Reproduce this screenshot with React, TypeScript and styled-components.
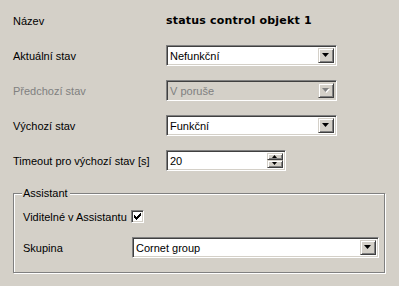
import React from "react";
import styled, { createGlobalStyle } from "styled-components";

const GlobalStyle = createGlobalStyle`
  html, body {
    margin: 0;
    padding: 0;
    background: #d4d0c8;
  }
  body {
    font-family: "Liberation Sans", Arial, sans-serif;
    font-size: 11px;
    color: #000000;
  }
`;

const Page = styled.div`
  width: 399px;
  height: 286px;
  background: #d4d0c8;
  overflow: hidden;
`;

const Form = styled.div`
  display: grid;
  grid-template-columns: 153px 171px;
  grid-auto-rows: 35px;
  align-items: center;
  padding: 3px 0 0 13px;
`;

const Label = styled.div<{ $disabled?: boolean }>`
  color: ${(p) => (p.$disabled ? "#808080" : "#000000")};
  white-space: nowrap;
`;

const Title = styled.div`
  font-family: "DejaVu Sans", "Liberation Sans", sans-serif;
  font-weight: bold;
  font-size: 11px;
  letter-spacing: 0.2px;
  white-space: nowrap;
`;

const Sunken = styled.div<{ $disabled?: boolean; $width?: number }>`
  box-sizing: border-box;
  width: ${(p) => (p.$width ? `${p.$width}px` : "100%")};
  height: 21px;
  display: flex;
  align-items: stretch;
  background: ${(p) => (p.$disabled ? "#d4d0c8" : "#ffffff")};
  border-top: 1px solid #808080;
  border-left: 1px solid #808080;
  border-bottom: 1px solid #ffffff;
  border-right: 1px solid #ffffff;
  box-shadow: inset 1px 1px 0 #404040, inset -1px -1px 0 #d4d0c8;
  padding: 2px;
`;

const FieldText = styled.div<{ $disabled?: boolean }>`
  flex: 1;
  display: flex;
  align-items: center;
  padding-left: 1px;
  color: ${(p) => (p.$disabled ? "#808080" : "#000000")};
  white-space: nowrap;
  overflow: hidden;
`;

const RaisedButton = styled.div<{ $h?: number }>`
  box-sizing: border-box;
  width: 16px;
  height: ${(p) => (p.$h ? `${p.$h}px` : "100%")};
  background: #d4d0c8;
  border-top: 1px solid #d4d0c8;
  border-left: 1px solid #d4d0c8;
  border-bottom: 1px solid #404040;
  border-right: 1px solid #404040;
  box-shadow: inset 1px 1px 0 #ffffff, inset -1px -1px 0 #808080;
  display: flex;
  align-items: center;
  justify-content: center;
`;

const SpinStack = styled.div`
  display: flex;
  flex-direction: column;
`;

const Arrow = ({ disabled, up, small }: { disabled?: boolean; up?: boolean; small?: boolean }) => {
  const w = small ? 5 : 7;
  const h = small ? 3 : 4;
  const pts = up ? `${w / 2},0 ${w},${h} 0,${h}` : `0,0 ${w},0 ${w / 2},${h}`;
  return (
    <svg width={w + 1} height={h + 1} viewBox={`0 0 ${w + 1} ${h + 1}`}>
      {disabled && <polygon points={pts} fill="#ffffff" transform="translate(1,1)" />}
      <polygon points={pts} fill={disabled ? "#808080" : "#000000"} />
    </svg>
  );
};

const Combo = ({ value, disabled, width }: { value: string; disabled?: boolean; width?: number }) => (
  <Sunken $disabled={disabled} $width={width}>
    <FieldText $disabled={disabled}>{value}</FieldText>
    <RaisedButton>
      <Arrow disabled={disabled} />
    </RaisedButton>
  </Sunken>
);

const Spinner = ({ value }: { value: string }) => (
  <Sunken $width={120}>
    <FieldText>{value}</FieldText>
    <SpinStack>
      <RaisedButton $h={8}>
        <Arrow up small />
      </RaisedButton>
      <RaisedButton $h={9}>
        <Arrow small />
      </RaisedButton>
    </SpinStack>
  </Sunken>
);

const Group = styled.div`
  position: relative;
  box-sizing: border-box;
  margin: 15px 0 0 13px;
  width: 372px;
  height: 80px;
  border: 1px solid #808080;
  box-shadow: inset 1px 1px 0 #ffffff, 1px 1px 0 #ffffff;
  padding: 12px 5px 0 9px;
  display: grid;
  grid-template-columns: 109px 1fr;
  grid-auto-rows: 21px;
  row-gap: 10px;
  align-items: center;
`;

const Legend = styled.div`
  position: absolute;
  top: -8px;
  left: 8px;
  padding: 0 2px 0 1px;
  background: #d4d0c8;
  line-height: 14px;
`;

const CheckBox = styled.div`
  box-sizing: border-box;
  width: 13px;
  height: 13px;
  margin-left: -1px;
  background: #ffffff;
  border-top: 1px solid #808080;
  border-left: 1px solid #808080;
  border-bottom: 1px solid #ffffff;
  border-right: 1px solid #ffffff;
  box-shadow: inset 1px 1px 0 #404040, inset -1px -1px 0 #d4d0c8;
  display: flex;
  align-items: center;
  justify-content: center;
`;

const Check = () => (
  <svg width="7" height="7" viewBox="0 0 7 7">
    <path d="M0 2h1v1h1v1h1V3h1V2h1V1h1V0h1v3H6v1H5v1H4v1H3v1H2V6H1V5H0z" fill="#000000" />
  </svg>
);

export default function App() {
  return (
    <Page>
      <GlobalStyle />
      <Form>
        <Label>Název</Label>
        <Title>status control objekt 1</Title>

        <Label>Aktuální stav</Label>
        <Combo value="Nefunkční" />

        <Label $disabled>Předchozí stav</Label>
        <Combo value="V poruše" disabled />

        <Label>Výchozí stav</Label>
        <Combo value="Funkční" />

        <Label>Timeout pro výchozí stav [s]</Label>
        <Spinner value="20" />
      </Form>

      <Group>
        <Legend>Assistant</Legend>
        <Label>Viditelné v Assistantu</Label>
        <CheckBox>
          <Check />
        </CheckBox>

        <Label>Skupina</Label>
        <Combo value="Cornet group" />
      </Group>
    </Page>
  );
}
